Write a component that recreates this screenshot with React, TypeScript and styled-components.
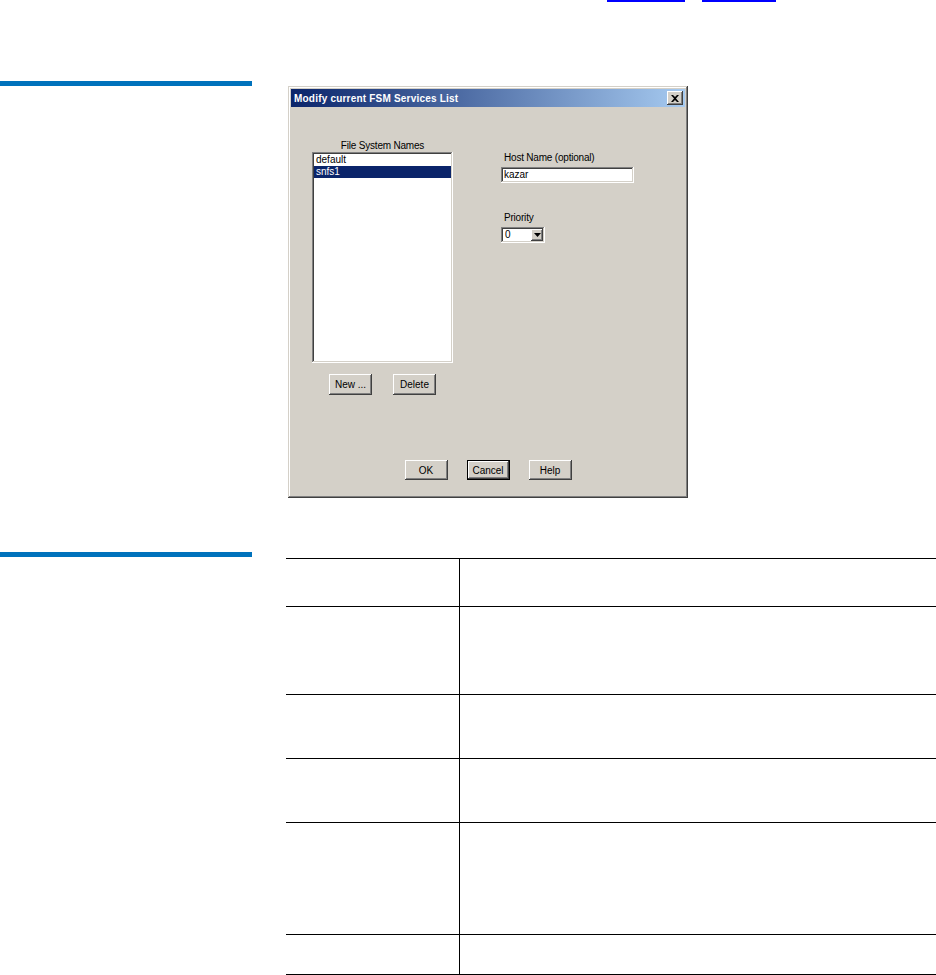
import React from "react";
import styled, { createGlobalStyle } from "styled-components";

const Global = createGlobalStyle`
  html, body { margin: 0; padding: 0; background: #ffffff; }
  body { overflow-x: hidden; font-family: "Liberation Sans", Arial, sans-serif; }
  #root { width: 936px; min-height: 975px; overflow: hidden; }
`;

const Page = styled.div`
  width: 936px;
  height: 975px;
  overflow: hidden;
  display: flex;
  flex-direction: column;
`;

const TopLinks = styled.div`
  display: flex;
  height: 2px;
  padding-left: 607px;
  gap: 17px;
`;

const LinkRule = styled.a<{ $w: number }>`
  display: block;
  width: ${(p) => p.$w}px;
  height: 2px;
  background: #0000ff;
`;

const Section = styled.section<{ $top: number }>`
  display: grid;
  grid-template-columns: 252px 1fr;
  column-gap: 36px;
  margin-top: ${(p) => p.$top}px;
  align-items: start;
`;

const SideBar = styled.div`
  height: 5px;
  background: #0072bc;
`;

const Content = styled.div<{ $offset: number; $shift?: number }>`
  padding-top: ${(p) => p.$offset}px;
  margin-left: ${(p) => p.$shift ?? 0}px;
`;

/* ---------- Windows classic dialog ---------- */

const Window = styled.div`
  width: 400px;
  height: 412px;
  box-sizing: border-box;
  padding: 3px;
  background: #d4d0c8;
  box-shadow: inset -1px -1px #404040, inset 1px 1px #d4d0c8,
    inset -2px -2px #808080, inset 2px 2px #ffffff;
  display: flex;
  flex-direction: column;
  font-family: "Liberation Sans", Arial, sans-serif;
  font-size: 10px;
  color: #000;
`;

const TitleBar = styled.div`
  height: 18px;
  display: flex;
  align-items: center;
  justify-content: space-between;
  padding: 0 2px 0 3px;
  background: linear-gradient(to right, #0a246a, #a6caf0);
`;

const TitleText = styled.span`
  color: #ffffff;
  font-weight: bold;
  font-size: 10px;
  letter-spacing: 0.2px;
  white-space: nowrap;
`;

const CloseButton = styled.button`
  width: 16px;
  height: 14px;
  padding: 0;
  border: none;
  background: #d4d0c8;
  box-shadow: inset -1px -1px #404040, inset 1px 1px #ffffff,
    inset -2px -2px #808080, inset 2px 2px #d4d0c8;
  display: flex;
  align-items: center;
  justify-content: center;
`;

const Body = styled.div`
  flex: 1;
  display: flex;
  flex-direction: column;
  padding: 32px 0 15px 21px;
`;

const Columns = styled.div`
  display: flex;
  align-items: flex-start;
  gap: 48px;
`;

const LeftColumn = styled.div`
  width: 141px;
  display: flex;
  flex-direction: column;
  align-items: center;
`;

const Label = styled.div<{ $center?: boolean }>`
  height: 13px;
  line-height: 13px;
  white-space: nowrap;
  letter-spacing: -0.2px;
  text-align: ${(p) => (p.$center ? "center" : "left")};
  padding-left: ${(p) => (p.$center ? 0 : 3)}px;
`;

const sunken = `
  background: #ffffff;
  box-shadow: inset -1px -1px #ffffff, inset 1px 1px #808080,
    inset -2px -2px #d4d0c8, inset 2px 2px #404040;
`;

const ListBox = styled.ul`
  ${sunken}
  list-style: none;
  margin: 0;
  width: 141px;
  height: 211px;
  box-sizing: border-box;
  padding: 2px;
`;

const ListItem = styled.li<{ $selected?: boolean }>`
  height: 12px;
  line-height: 12px;
  padding-left: 2px;
  background: ${(p) => (p.$selected ? "#0a246a" : "transparent")};
  color: ${(p) => (p.$selected ? "#ffffff" : "#000000")};
`;

const ButtonRow = styled.div<{ $gap: number; $top: number }>`
  display: flex;
  justify-content: center;
  gap: ${(p) => p.$gap}px;
  margin-top: ${(p) => p.$top}px;
`;

const Button = styled.button<{ $default?: boolean; $h?: number }>`
  width: 43px;
  height: ${(p) => p.$h ?? 20}px;
  padding: 0;
  border: none;
  background: #d4d0c8;
  font-family: "Liberation Sans", Arial, sans-serif;
  font-size: 10px;
  color: #000;
  box-shadow: ${(p) =>
    p.$default
      ? "inset 0 0 0 1px #000000, inset -2px -2px #404040, inset 2px 2px #ffffff, inset -3px -3px #808080"
      : "inset -1px -1px #404040, inset 1px 1px #ffffff, inset -2px -2px #808080, inset 2px 2px #d4d0c8"};
`;

const RightColumn = styled.div`
  display: flex;
  flex-direction: column;
  padding-top: 12px;
`;

const TextField = styled.div`
  ${sunken}
  width: 133px;
  height: 16px;
  box-sizing: border-box;
  padding: 0 3px;
  line-height: 16px;
  margin-top: 3px;
`;

const Combo = styled.div`
  ${sunken}
  width: 44px;
  height: 16px;
  box-sizing: border-box;
  padding: 2px;
  margin-top: 3px;
  display: flex;
  align-items: stretch;
`;

const ComboValue = styled.span`
  flex: 1;
  padding-left: 2px;
  line-height: 12px;
`;

const ComboButton = styled.span`
  width: 12px;
  background: #d4d0c8;
  box-shadow: inset -1px -1px #404040, inset 1px 1px #ffffff,
    inset -2px -2px #808080;
  display: flex;
  align-items: center;
  justify-content: center;
`;

const Spacer = styled.div<{ $h: number }>`
  height: ${(p) => p.$h}px;
`;

const BottomRow = styled(ButtonRow)`
  margin-top: auto;
  margin-left: -21px;
`;

/* ---------- Table ---------- */

const Table = styled.table`
  width: 652px;
  border-collapse: collapse;
  table-layout: fixed;
`;

const Row = styled.tr<{ $h: number }>`
  height: ${(p) => p.$h}px;
  border-top: 1px solid #000;
  &:last-child { border-bottom: 1px solid #000; }
`;

const Cell = styled.td<{ $first?: boolean }>`
  padding: 0;
  width: ${(p) => (p.$first ? "173px" : "auto")};
  border-right: ${(p) => (p.$first ? "1px solid #000" : "none")};
`;

const rows = [48, 88, 64, 64, 112, 40];

export default function App() {
  return (
    <>
      <Global />
      <Page>
        <TopLinks>
          <LinkRule $w={78} />
          <LinkRule $w={74} />
        </TopLinks>

        <Section $top={79}>
          <SideBar />
          <Content $offset={5}>
            <Window>
              <TitleBar>
                <TitleText>Modify current FSM Services List</TitleText>
                <CloseButton aria-label="Close">
                  <svg width="8" height="7" viewBox="0 0 8 7">
                    <path d="M0 0h2l2 2 2-2h2L5 3.5 8 7H6L4 5 2 7H0l3-3.5z" fill="#000" />
                  </svg>
                </CloseButton>
              </TitleBar>
              <Body>
                <Columns>
                  <LeftColumn>
                    <Label $center>File System Names</Label>
                    <ListBox>
                      <ListItem>default</ListItem>
                      <ListItem $selected>snfs1</ListItem>
                    </ListBox>
                    <ButtonRow $gap={21} $top={11}>
                      <Button $h={21}>New ...</Button>
                      <Button $h={21}>Delete</Button>
                    </ButtonRow>
                  </LeftColumn>
                  <RightColumn>
                    <Label>Host Name (optional)</Label>
                    <TextField>kazar</TextField>
                    <Spacer $h={28} />
                    <Label>Priority</Label>
                    <Combo>
                      <ComboValue>0</ComboValue>
                      <ComboButton>
                        <svg width="7" height="4" viewBox="0 0 7 4">
                          <path d="M0 0h7L3.5 4z" fill="#000" />
                        </svg>
                      </ComboButton>
                    </Combo>
                  </RightColumn>
                </Columns>
                <BottomRow $gap={19} $top={0}>
                  <Button>OK</Button>
                  <Button $default>Cancel</Button>
                  <Button>Help</Button>
                </BottomRow>
              </Body>
            </Window>
          </Content>
        </Section>

        <Section $top={54}>
          <SideBar />
          <Content $offset={6} $shift={-2}>
            <Table>
              <tbody>
                {rows.map((h, i) => (
                  <Row key={i} $h={h}>
                    <Cell $first />
                    <Cell />
                  </Row>
                ))}
              </tbody>
            </Table>
          </Content>
        </Section>
      </Page>
    </>
  );
}
